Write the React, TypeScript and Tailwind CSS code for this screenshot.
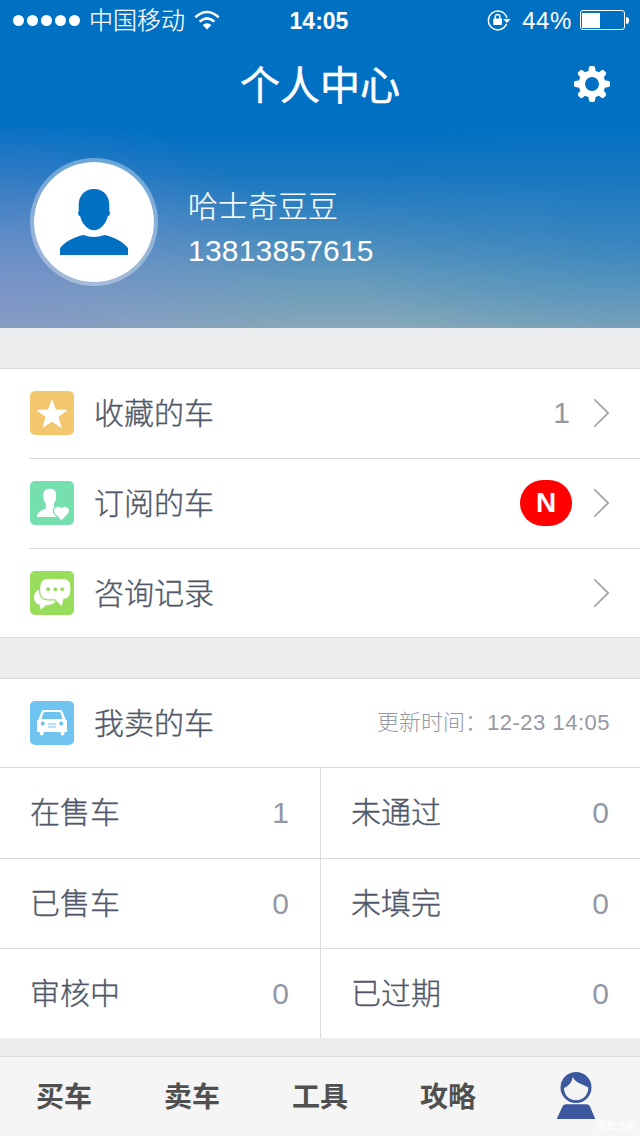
import type {ReactNode} from "react";
import {clsx} from "clsx";

const ChevronRight = () => (
    <svg width="16" height="30" viewBox="0 0 16 30" fill="none" stroke="#a3a5aa" strokeWidth="1.8">
        <path d="M.2 1.300L14.200 15L.2 28.700" />
    </svg>
);

const WifiIcon = () => (
    <svg width="26" height="20" viewBox="0 0 26 20" fill="none" stroke="#fff" strokeWidth="2.6">
        <path d="M1.3 7.2Q13 -3.2 24.7 7.2" />
        <path d="M5.6 11.6Q13 5 20.4 11.6" />
        <path d="M13 19.400L8.6 15Q13 11.500 17.4 15Z" fill="#fff" stroke="none" />
    </svg>
);

const RotationLockIcon = () => (
    <svg width="24" height="22" viewBox="0 0 24 22" fill="none" stroke="#fff" strokeWidth="1.5">
        <path d="M19.6 14.8A9.4 9.4 0 1 1 19.9 9" />
        <path d="M16.2 10h7.4l-3.7 4Z" fill="#fff" stroke="none" />
        <rect x="6.3" y="9.5" width="8.6" height="6.6" rx=".6" fill="#fff" stroke="none" />
        <path d="M8.2 10V7.9a2.4 2.4 0 0 1 4.8 0V10" strokeWidth="1.4" />
    </svg>
);

const GearIcon = () => (
    <svg width="36" height="36" viewBox="-18 -18 36 36">
        <g fill="#fff">
            {[0, 45, 90, 135, 180, 225, 270, 315].map((angle) => (
                <path key={angle} d="M-4 -11L-3 -16.6Q-2.7 -18 -1.4 -18H1.4Q2.7 -18 3 -16.6L4 -11Z" transform={`rotate(${angle})`} />
            ))}
        </g>
        <circle r="10.2" fill="none" stroke="#fff" strokeWidth="6.4" />
    </svg>
);

const AvatarIcon = () => (
    <svg width="68" height="66" viewBox="0 0 68 66" fill="#0070c3">
        <path d="M34 0C43.500 0 49.300 6.800 49.300 16V22.500Q50.400 22.600 49.800 25Q49.300 27.400 47.800 27.300C45.800 35.500 40 41.300 34 41.300S22.200 35.500 20.200 27.300Q18.700 27.400 18.200 25Q17.600 22.600 18.700 22.500V16C18.700 6.800 24.500 0 34 0Z" />
        <path d="M0 66V59C6 52 14 48 23.500 46Q34 50.200 44.500 46C54 48 62 52 68 59V66Z" />
    </svg>
);

const StarIcon = () => (
    <svg width="44" height="44" viewBox="0 0 44 44" fill="#fff">
        <path d="M22 7.800L26 18.500L37.600 18.900L28.500 26L31.700 37.100L22 30.700L12.300 37.100L15.500 26L6.400 18.900L18 18.500Z" />
    </svg>
);

const SubscribeIcon = () => (
    <svg width="44" height="44" viewBox="0 0 44 44" fill="#fff">
        <path d="M13.500 13C13.500 9.500 16 7.800 19.800 7.800S26 9.500 26 13C26.800 17 25.500 20 24 22.500V26.500C25 28 28 28.500 31 30V36H7C7 31.500 10 29.800 15.800 27.500V22.500C14 20 12.800 17 13.500 13Z" />
        <path d="M31.500 39.200L25 32.400C21.500 28.200 27.800 22.800 31.500 27.500C35.200 22.800 41.500 28.200 38 32.400Z" stroke="#76dfae" strokeWidth="2.6" paintOrder="stroke" />
    </svg>
);

const ChatIcon = () => (
    <svg width="44" height="44" viewBox="0 0 44 44" fill="#fff">
        <path d="M13 18C7 18 4 21.500 4 26.500C4 30.500 6.500 33 10 34L10.500 38.800L16 34.200C20 34.200 24 33 26 30Z" />
        <path d="M18 8H33Q40.300 8 40.300 15.500V20Q40.300 27.500 33.500 27.800L31.700 35L25 28.300H18Q10.300 28 10.300 20.500V15.500Q10.300 8 18 8Z" stroke="#98dd5b" strokeWidth="2.600" paintOrder="stroke" />
        <g fill="#98dd5b">
            <circle cx="18.200" cy="18.200" r="2" />
            <circle cx="25.200" cy="18.200" r="2" />
            <circle cx="32.200" cy="18.200" r="2" />
        </g>
    </svg>
);

const CarIcon = () => (
    <svg width="44" height="44" viewBox="0 0 44 44">
        <path d="M14 9H30Q32 9 32.700 11L35.500 18L37 20V31H34.500V32.500A2 2 0 0 1 30.500 32.500V31H13.700V32.500A2 2 0 0 1 9.700 32.500V31H7V20L8.700 18L11.300 11Q12 9 14 9Z" fill="#fff" />
        <g fill="#6ec3ef">
            <path d="M14.500 11H29.500Q30.200 11 30.500 11.800L32.500 18H11.500L13.500 11.800Q13.800 11 14.500 11Z" />
            <circle cx="12.700" cy="22.500" r="2" />
            <circle cx="31.300" cy="22.500" r="2" />
            <path d="M18 22.500h8v1h-8zM18 25.500h8v1h-8z" />
        </g>
    </svg>
);

const ProfileTabIcon = () => (
    <svg width="40" height="48" viewBox="0 0 40 48" fill="#3c589e">
        <circle cx="20" cy="15.500" r="15.500" />
        <path d="M8 16C12.500 14 16 10.500 16.800 4.800C18.500 10.500 26 12 32.300 15.500C32.300 23 27 28.200 20 28.200S8 23 8 16Z" fill="#f5f5f5" />
        <path d="M.7 47L6.500 34.500Q7.500 32.200 10 32.200H30.500Q33 32.200 34 34.500L39.300 47Z" />
    </svg>
);

interface MenuRowProps {
    icon: ReactNode;
    iconBg: string;
    label: string;
    first?: boolean;
    children?: ReactNode;
}

const MenuRow = ({icon, iconBg, label, first, children}: MenuRowProps) => (
    <div className="h-[90px] flex pl-[29px]">
        <div className={clsx("flex-1 flex items-center pr-[30px] pl-px", !first && "border-t border-[#dadbdd] pb-px")}>
            <span className={clsx("size-11 rounded-[5px] overflow-hidden shrink-0", iconBg)}>{icon}</span>
            <span className="ml-5 pt-0.5 flex-1 text-[30px] leading-none [-webkit-text-stroke:0.35px]">{label}</span>
            {children}
        </div>
    </div>
);

const stats = [
    {label: "在售车", count: 1},
    {label: "未通过", count: 0},
    {label: "已售车", count: 0},
    {label: "未填完", count: 0},
    {label: "审核中", count: 0},
    {label: "已过期", count: 0}
];

const tabs = ["买车", "卖车", "工具", "攻略"];

const App = () => {
    return (
        <div className="relative w-[640px] h-[1136px] overflow-hidden flex flex-col bg-[#ebecee] text-[#50586a] font-light font-['Liberation_Sans','Noto_Sans_CJK_SC',sans-serif]">
            {/* 상태바 */}
            <div className="h-10 shrink-0 bg-[#0070c3] text-white grid grid-cols-3 items-center leading-none">
                <div className="flex items-center pl-[13px]">
                    <div className="flex gap-[3px]">
                        {[0, 1, 2, 3, 4].map((dot) => (
                            <span key={dot} className="size-[11px] rounded-full bg-white" />
                        ))}
                    </div>
                    <span className="ml-[9px] pt-0.5 text-[24px] whitespace-nowrap [-webkit-text-stroke:0.2px]">中国移动</span>
                    <span className="ml-[9px]"><WifiIcon /></span>
                </div>
                <span className="pt-0.5 pr-0.5 text-center text-[23px] font-bold">14:05</span>
                <div className="flex items-center justify-end pr-[11px]">
                    <RotationLockIcon />
                    <span className="ml-[11px] pt-0.5 text-[24px] tracking-[0.6px]">44%</span>
                    <span className="ml-2 w-[45px] h-5 rounded-[3px] border border-white p-[1.5px]">
                        <span className="block w-[18px] h-full bg-white" />
                    </span>
                    <span className="ml-px w-[3px] h-[7px] rounded-r-full bg-white" />
                </div>
            </div>

            <header className="h-[88px] shrink-0 bg-[#0070c3] text-white grid grid-cols-[1fr_auto_1fr] items-center">
                <span />
                <h1 className="pt-[3px] text-[40px] leading-none font-normal [-webkit-text-stroke:0.5px]">个人中心</h1>
                <span className="justify-self-end pr-[30px]"><GearIcon /></span>
            </header>

            {/* 프로필 */}
            <div className="h-[200px] shrink-0 flex items-center pl-[30px] pb-3 text-white bg-[radial-gradient(ellipse_300px_180px_at_0%_80%,rgba(138,140,212,0.5),transparent),radial-gradient(ellipse_300px_140px_at_100%_55%,rgba(20,120,192,0.35),transparent),linear-gradient(to_bottom,#0070c3_0%,#1676c0_22%,#3c86bf_48%,#6399bc_74%,#86a8b8_100%)]">
                <div className="size-32 rounded-full border-4 border-white/35 bg-white bg-clip-padding flex items-center justify-center">
                    <AvatarIcon />
                </div>
                <div className="ml-[30px] mt-3.5 text-[30px] leading-[44px]">
                    <div className="[-webkit-text-stroke:0.2px]">哈士奇豆豆</div>
                    <div className="tracking-[0.2px]">13813857615</div>
                </div>
            </div>

            <section className="mt-10 h-[270px] shrink-0 bg-white shadow-[inset_0_1px_#dadbdd,inset_0_-1px_#dadbdd]">
                <MenuRow icon={<StarIcon />} iconBg="bg-[#f3c76d]" label="收藏的车" first>
                    <span className="mr-6 text-[30px] leading-none text-[#9498a6]">1</span>
                    <ChevronRight />
                </MenuRow>
                <MenuRow icon={<SubscribeIcon />} iconBg="bg-[#76dfae]" label="订阅的车">
                    <span className="mr-[22px] w-[52px] h-[46px] rounded-[23px] bg-[#ff0000] text-white text-[28px] font-bold flex items-center justify-center">N</span>
                    <ChevronRight />
                </MenuRow>
                <MenuRow icon={<ChatIcon />} iconBg="bg-[#98dd5b]" label="咨询记录">
                    <ChevronRight />
                </MenuRow>
            </section>

            <section className="mt-10 h-[360px] shrink-0 bg-white">
                <div className="border-t border-[#dadbdd]">
                    <div className="-mt-px">
                        <MenuRow icon={<CarIcon />} iconBg="bg-[#6ec3ef]" label="我卖的车" first>
                            <span className="text-[22px] leading-none text-[#9599a3]">
                                更新时间：<span className="tracking-[0.5px]">12-23 14:05</span>
                            </span>
                        </MenuRow>
                    </div>
                </div>
                <div className="-mt-px grid grid-cols-[320px_320px]">
                    {stats.map((stat, index) => (
                        <div
                            key={stat.label}
                            className={clsx(
                                "border-t border-[#dadbdd] flex items-center justify-between text-[30px] leading-none pl-[30px] pr-[31px]",
                                index < 2 ? "h-[91px]" : "h-[90px]",
                                index % 2 === 1 && "border-l"
                            )}
                        >
                            <span className="[-webkit-text-stroke:0.35px]">{stat.label}</span>
                            <span className="text-[#9498a6]">{stat.count}</span>
                        </div>
                    ))}
                </div>
            </section>

            {/* 하단 탭 */}
            <nav className="mt-[18px] h-20 shrink-0 border-t border-[#dcddde] bg-[#f5f5f5] grid grid-cols-5 items-center justify-items-center text-[28px] font-bold text-[#505050]">
                {tabs.map((tab) => (
                    <span key={tab} className="pt-0.5 leading-none">{tab}</span>
                ))}
                <span className="pb-0.5"><ProfileTabIcon /></span>
            </nav>
            <span className="absolute right-1 bottom-1 text-[10px] leading-none font-bold text-white/80">汽车之家</span>
        </div>
    );
};

export default App;
